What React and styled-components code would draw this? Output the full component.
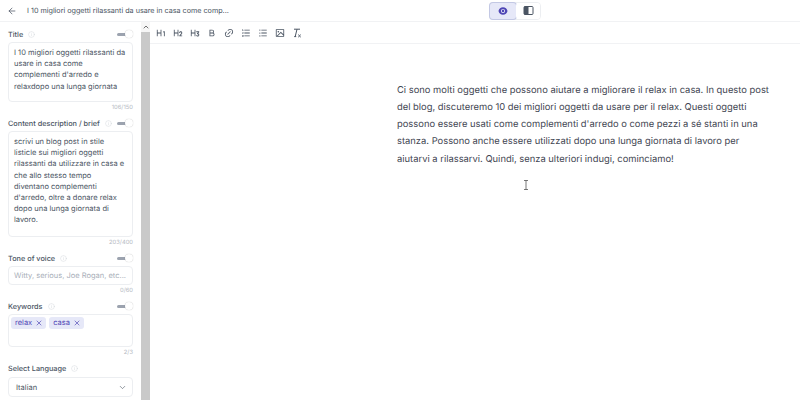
import React from 'react';
import styled, { createGlobalStyle } from 'styled-components';
import { ArrowLeft, ChevronDown, ChevronUp, Info, X } from 'lucide-react';
import { RiBold, RiEyeFill, RiH1, RiH2, RiH3, RiImageLine, RiLink, RiListOrdered, RiListUnordered } from 'react-icons/ri';

const GlobalStyle = createGlobalStyle`
  html, body {
    margin: 0;
    height: 100%;
    background: #fff;
    font-family: Inter, "Liberation Sans", sans-serif;
    text-rendering: geometricPrecision;
  }
  #root { height: 100%; }
`;

const Page = styled.div`
  position: relative;
  width: 800px;
  height: 400px;
  overflow: hidden;
  display: flex;
  flex-direction: column;
  background: #fff;
`;

const Header = styled.header`
  height: 21px;
  flex: none;
  display: grid;
  grid-template-columns: 489px auto 1fr;
  align-items: center;
  border-bottom: 1px solid #f1f2f4;
`;

const HeaderLeft = styled.div`
  display: flex;
  align-items: center;
  padding-left: 7px;
  gap: 10px;
  color: #4b5563;
`;

const DocTitle = styled.span`
  font-size: 7.2px;
  color: #4b5563;
  white-space: nowrap;
`;

const ViewSwitch = styled.div`
  display: flex;
  height: 18px;
  box-sizing: border-box;
  border: 1px solid #eceef1;
  border-radius: 4px;
`;

const ViewButton = styled.div`
  width: ${p => (p.$active ? 26 : 24)}px;
  display: flex;
  align-items: center;
  justify-content: center;
  border-radius: 3px;
  background: ${p => (p.$active ? '#e6e8f8' : '#fff')};
  box-shadow: ${p => (p.$active ? '0 0 0 1px #c3c8e4' : 'none')};
  color: ${p => (p.$active ? '#4f46b5' : '#4b5563')};
`;

const Body = styled.div`
  flex: 1;
  display: flex;
  min-height: 0;
`;

const Sidebar = styled.aside`
  width: 141px;
  flex: none;
  box-sizing: border-box;
  padding: 7px 8px 0 8px;
  overflow: hidden;
`;

const ScrollTrack = styled.div`
  width: 9px;
  flex: none;
  display: flex;
  flex-direction: column;
  background: #f6f6f6;
  color: #555;
`;

const ScrollArrow = styled.div`
  height: 10px;
  display: flex;
  justify-content: center;
  align-items: center;
`;

const ScrollThumb = styled.div`
  flex: 1;
  background: #c9c9c9;
`;

const Field = styled.div`
  margin-bottom: 6.5px;
`;

const LabelRow = styled.div`
  display: flex;
  align-items: center;
  height: 10px;
  margin-bottom: ${p => p.$gap ?? 2.5}px;
`;

const Label = styled.label`
  font-size: 7.3px;
  font-weight: 500;
  color: #4b5563;
  white-space: nowrap;
`;

const InfoIcon = styled(Info)`
  margin-left: 5px;
  color: #d1d5db;
`;

const Toggle = styled.div`
  position: relative;
  margin-left: auto;
  margin-right: 1px;
  width: 15px;
  height: 3px;
  border-radius: 2px;
  background: #9ca3af;
  &::after {
    content: '';
    position: absolute;
    right: -1px;
    top: -2.5px;
    width: 8px;
    height: 8px;
    border-radius: 50%;
    background: #fff;
    box-shadow: 0 0 1px rgba(0, 0, 0, 0.3);
  }
`;

const TextBox = styled.div`
  box-sizing: border-box;
  height: ${p => p.$height}px;
  border: 1px solid #eceef1;
  border-radius: 4px;
  padding: ${p => p.$padding ?? '4.5px 5px'};
  font-size: 7.5px;
  line-height: 11.2px;
  color: ${p => (p.$muted ? '#a9afb9' : '#4b5563')};
  white-space: ${p => (p.$single ? 'nowrap' : 'normal')};
`;

const Counter = styled.div`
  text-align: right;
  font-size: 5.8px;
  line-height: 8px;
  margin-top: 2px;
  color: #b4b9c2;
`;

const Tags = styled.div`
  display: flex;
  gap: 3px;
`;

const Tag = styled.span`
  display: inline-flex;
  align-items: center;
  gap: 3px;
  height: 12px;
  padding: 0 3px 0 4px;
  border-radius: 3px;
  background: #e6e8f8;
  color: #4f46b5;
  font-size: 7.5px;
`;

const SelectBox = styled.div`
  box-sizing: border-box;
  height: 20px;
  display: flex;
  align-items: center;
  justify-content: space-between;
  padding: 0 5px 0 7px;
  border: 1px solid #eceef1;
  border-radius: 4px;
  font-size: 7.5px;
  color: #4b5563;
`;

const Main = styled.main`
  flex: 1;
  min-width: 0;
  display: flex;
  flex-direction: column;
`;

const Toolbar = styled.div`
  height: 22px;
  box-sizing: border-box;
  flex: none;
  display: flex;
  align-items: center;
  padding-left: 6px;
  gap: 7px;
  border-bottom: 1px solid #f1f2f4;
  color: #4b5563;
`;

const ToolIcon = styled.span`
  display: flex;
  width: 10px;
  justify-content: center;
`;

const Article = styled.article`
  margin: 38px 0 0 247px;
  width: 376px;
  font-size: 9.4px;
  line-height: 17.15px;
  color: #3f4652;
`;

const TextCursor = styled.svg`
  position: absolute;
  left: 523px;
  top: 180px;
`;

const SidePanelIcon = () => (
  <svg width="11" height="11" viewBox="0 0 11 11">
    <rect x="1" y="1.5" width="9" height="8" rx="1" fill="none" stroke="currentColor" strokeWidth="1" />
    <rect x="1" y="1.5" width="4.5" height="8" fill="currentColor" />
  </svg>
);

const ClearFormatIcon = () => (
  <svg width="10" height="10" viewBox="0 0 10 10" fill="none" stroke="currentColor" strokeWidth="1">
    <path d="M2 1.2h6M5 1.2L3.2 8.6M2.2 8.6h2" />
    <path d="M6.2 6.6l2.6 2.6M8.8 6.6L6.2 9.2" strokeWidth="0.9" />
  </svg>
);

const tools = [
  <RiH1 size={10} />,
  <RiH2 size={10} />,
  <RiH3 size={10} />,
  <RiBold size={10} />,
  <RiLink size={10} />,
  <RiListOrdered size={10} />,
  <RiListUnordered size={10} />,
  <RiImageLine size={10} />,
  <ClearFormatIcon />,
];

const FieldHead = ({ label, toggle = true, gap }) => (
  <LabelRow $gap={gap}>
    <Label>{label}</Label>
    <InfoIcon size={7} strokeWidth={1.5} />
    {toggle && <Toggle />}
  </LabelRow>
);

const App = () => (
  <Page>
    <GlobalStyle />
    <Header>
      <HeaderLeft>
        <ArrowLeft size={10} strokeWidth={1.8} />
        <DocTitle>I 10 migliori oggetti rilassanti da usare in casa come comp...</DocTitle>
      </HeaderLeft>
      <ViewSwitch>
        <ViewButton $active><RiEyeFill size={10} /></ViewButton>
        <ViewButton><SidePanelIcon /></ViewButton>
      </ViewSwitch>
      <span />
    </Header>
    <Body>
      <Sidebar>
        <Field>
          <FieldHead label="Title" />
          <TextBox $height={60}>I 10 migliori oggetti rilassanti da usare in casa come complementi d'arredo e relaxdopo una lunga giornata</TextBox>
          <Counter>106/150</Counter>
        </Field>
        <Field>
          <FieldHead label="Content description / brief" />
          <TextBox $height={106}>scrivi un blog post in stile listicle sui migliori oggetti rilassanti da utilizzare in casa e che allo stesso tempo diventano complementi d'arredo, oltre a donare relax dopo una lunga giornata di lavoro.</TextBox>
          <Counter>203/400</Counter>
        </Field>
        <Field>
          <FieldHead label="Tone of voice" />
          <TextBox $height={19} $muted $single $padding="3px 5px">Witty, serious, Joe Rogan, etc...</TextBox>
          <Counter>0/60</Counter>
        </Field>
        <Field>
          <FieldHead label="Keywords" />
          <TextBox $height={33} $padding="2px 2px">
            <Tags>
              <Tag>relax <X size={8} strokeWidth={2} /></Tag>
              <Tag>casa <X size={8} strokeWidth={2} /></Tag>
            </Tags>
          </TextBox>
          <Counter>2/3</Counter>
        </Field>
        <Field>
          <FieldHead label="Select Language" toggle={false} gap={4} />
          <SelectBox>
            Italian
            <ChevronDown size={9} strokeWidth={1.6} />
          </SelectBox>
        </Field>
      </Sidebar>
      <ScrollTrack>
        <ScrollArrow><ChevronUp size={8} strokeWidth={2.5} /></ScrollArrow>
        <ScrollThumb />
      </ScrollTrack>
      <Main>
        <Toolbar>
          {tools.map((icon, i) => (
            <ToolIcon key={i}>{icon}</ToolIcon>
          ))}
        </Toolbar>
        <Article>
          Ci sono molti oggetti che possono aiutare a migliorare il relax in casa. In questo post del blog, discuteremo 10 dei migliori oggetti da usare per il relax. Questi oggetti possono essere usati come complementi d'arredo o come pezzi a sé stanti in una stanza. Possono anche essere utilizzati dopo una lunga giornata di lavoro per aiutarvi a rilassarvi. Quindi, senza ulteriori indugi, cominciamo!
        </Article>
      </Main>
    </Body>
    <TextCursor width="6" height="10" viewBox="0 0 6 10" fill="none" stroke="#555" strokeWidth="0.8">
      <path d="M1 0.5h4M3 0.5v9M1 9.5h4" />
    </TextCursor>
  </Page>
);

export default App;
